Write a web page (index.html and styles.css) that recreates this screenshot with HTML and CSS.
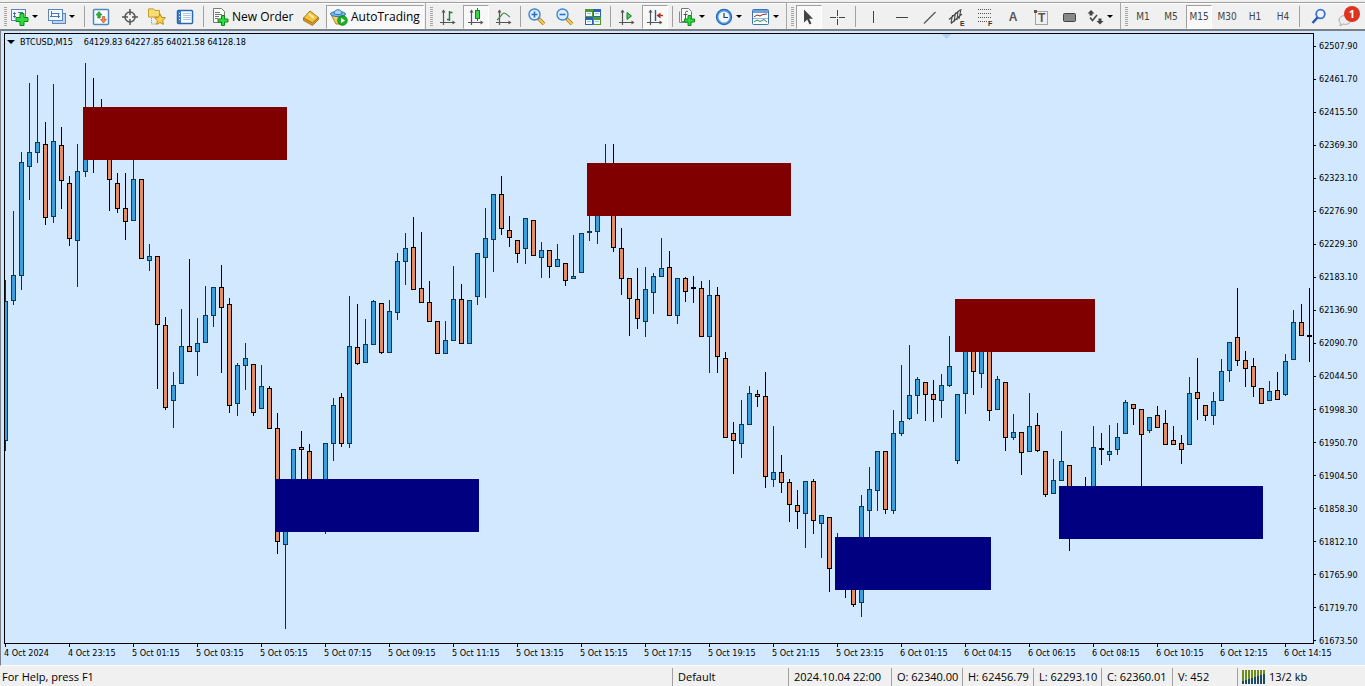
FILE: index.html
```
<!DOCTYPE html>
<html lang="en">
<head>
<meta charset="utf-8">
<title>BTCUSD,M15</title>
<link rel="stylesheet" href="styles.css">
</head>
<body>
<header class="toolbar">
  <div class="group">
    <span class="grip"></span>
    <button class="btn drop" aria-label="New chart"><svg class="icon" viewBox="0 0 18 18"><rect x=".5" y="1.500" width="14" height="11" fill="#f4f9ff" stroke="#5a86bd"/><path d="M3.500 4v6M2 5.500h3M2 8.500h3M7 4.500h5" stroke="#4a78b5" fill="none"/><path d="M9 5.500h4v4h4v4h-4v4H9v-4H5v-4h4z" fill="#2fdc3c" stroke="#0a8a1a"/></svg><span class="caret"></span></button>
    <button class="btn drop" aria-label="Profiles"><svg class="icon" viewBox="0 0 18 18"><rect x="4.500" y="5.500" width="13" height="10" fill="#b9d4f2" stroke="#5a86bd"/><rect x=".5" y="1.500" width="14" height="11" fill="#f4f9ff" stroke="#5a86bd"/><path d="M3.500 3v6M2 8.500h10M10.500 5v5M3.500 5.500h8" stroke="#4a78b5" fill="none"/></svg><span class="caret"></span></button>
    <span class="sep narrow"></span>
    <button class="btn" aria-label="Market watch"><svg class="icon" viewBox="0 0 18 18"><rect x="1.500" y="1.500" width="15" height="15" rx="1" fill="#f7fbff" stroke="#4f86c4" stroke-width="1.500"/><path d="M7 3.500 10 7H8.200v3H5.800V7H4z" fill="#2fb53a" stroke="#0c7d1c" stroke-width=".6"/><path d="M11.500 15 8.500 11.500h1.800v-3h2.400v3h1.800z" fill="#f4874b" stroke="#b9441a" stroke-width=".6"/></svg></button>
    <button class="btn" aria-label="Data window"><svg class="icon" viewBox="0 0 18 18"><circle cx="10" cy="9" r="5" fill="none" stroke="#555" stroke-width="1.500"/><path d="M10 1v6M10 11v6M2 9h6M12 9h6" stroke="#555" stroke-width="1.500"/></svg></button>
    <button class="btn" aria-label="Navigator"><svg class="icon" viewBox="0 0 18 18"><path d="M.5 2V.9h5l1.500 1.500h4.500V9H.5z" fill="#f7dc77" stroke="#c49a28"/><path d="M3.500 10v6H8" stroke="#888" stroke-dasharray="1 1" fill="none"/><path d="m12 5.800 1.700 3.500 3.800.5-2.800 2.700.7 3.900-3.400-1.900-3.400 1.900.7-3.900-2.800-2.700 3.800-.5z" fill="#fbd04a" stroke="#bd8a16"/></svg></button>
    <button class="btn" aria-label="Terminal"><svg class="icon" viewBox="0 0 18 18"><rect x="1.500" y="2.500" width="15" height="13" rx="1" fill="#fff" stroke="#2a66b4" stroke-width="1.500"/><path d="M2 3h3v12H2z" fill="#3b7bc8"/><path d="M7 5.500h8M7 7.500h8M7 9.500h8M7 11.500h8" stroke="#a8c6e8"/><path d="M3 5.500h1M3 8.500h1M3 11.500h1" stroke="#fff"/></svg></button>
    <span class="sep"></span>
    <button class="btn label order"><svg class="icon" viewBox="0 0 18 18"><path d="M1.500.5h8l3 3v11h-11z" fill="#fff" stroke="#777"/><path d="M3 4.500h5M3 6.500h7M3 8.500h4M3 10.500h3" stroke="#777"/><path d="M9.500 7.500h3v3.500h3.500v3h-3.500v3.500h-3V14H6v-3h3.500z" fill="#2fdc3c" stroke="#0a8a1a"/></svg>New Order</button>
    <button class="btn" aria-label="MetaEditor"><svg class="icon" viewBox="0 0 18 18"><path d="M1.500 10 8 3l8.500 6.500L10.500 15z" fill="#f3c443" stroke="#b07d16"/><path d="M1.500 10v2.500l9 5 6-6V9.500l-6 5.500z" fill="#d99b2b" stroke="#9a6a12" stroke-width=".8"/><path d="m7 6 5 3.800" stroke="#fde9a5" stroke-width="2"/></svg></button>
    <button class="btn label auto pressed"><svg class="icon" viewBox="0 0 18 18"><path d="M1.500 7.500h13L11 16H6z" fill="#f2cf5a" stroke="#ad8524"/><ellipse cx="8" cy="6" rx="7.500" ry="2.600" fill="#78b7e8" stroke="#2d78b8"/><path d="M4 5.500C4 .5 12 .5 12 5.500c-2 1.500-6 1.500-8 0z" fill="#a7d5f5" stroke="#2d78b8"/><circle cx="12.500" cy="12.500" r="4.800" fill="#20b02b" stroke="#0b7a18" stroke-width=".8"/><path d="m11 10 4 2.500-4 2.500z" fill="#fff"/></svg>AutoTrading</button>
  </div>
  <div class="group">
    <span class="grip"></span>
    <button class="btn" aria-label="Bar chart"><svg class="icon" viewBox="0 0 18 18"><use href="#axes"/><path d="M10.500 3v10M8 11.500h2.500M10.500 4.500h3" stroke="#16802a" stroke-width="1.400" fill="none"/></svg></button>
    <button class="btn pressed" aria-label="Candlesticks"><svg class="icon" viewBox="0 0 18 18"><use href="#axes"/><path d="M10.500 0v13" stroke="#16802a"/><rect x="8.500" y="2.500" width="4" height="8" fill="#35d843" stroke="#16802a"/></svg></button>
    <button class="btn" aria-label="Line chart"><svg class="icon" viewBox="0 0 18 18"><use href="#axes"/><path d="M2 12C5 10 7 5 9 5s4 3 6 4" stroke="#3b8a47" fill="none" stroke-width="1.200"/></svg></button>
    <span class="sep narrow"></span>
    <button class="btn" aria-label="Zoom in"><svg class="icon" viewBox="0 0 18 18"><use href="#lens"/><path d="M3.500 6.500h6M6.500 3.500v6" stroke="#2b72bd" stroke-width="1.600"/></svg></button>
    <button class="btn" aria-label="Zoom out"><svg class="icon" viewBox="0 0 18 18"><use href="#lens"/><path d="M3.500 6.500h6" stroke="#2b72bd" stroke-width="1.600"/></svg></button>
    <button class="btn" aria-label="Tile windows"><svg class="icon" viewBox="0 0 18 18"><path d="M1 1h8v8H1z" fill="#4b9c2c"/><path d="M9 1h8v8H9zM1 9h8v8H1z" fill="#2a62b8"/><path d="M9 9h8v8H9z" fill="#4b9c2c"/><path d="M2 4h6v4H2zM10 4h6v4h-6zM2 12h6v4H2zM10 12h6v4h-6z" fill="#f2f8fc"/><path d="M3 5.500h4M11 5.500h4M3 13.500h4M11 13.500h4" stroke="#9bbde0"/></svg></button>
    <span class="sep mid"></span>
    <button class="btn" aria-label="Auto scroll"><svg class="icon" viewBox="0 0 18 18"><use href="#axes"/><path d="m9 4.500 4.500 3.500L9 11.500z" fill="#4ccb55" stroke="#16802a"/></svg></button>
    <button class="btn pressed" aria-label="Chart shift"><svg class="icon" viewBox="0 0 18 18"><use href="#axes"/><path d="M9.500 2v11" stroke="#2b5b91" stroke-width="1.400"/><path d="M17 7.500h-5" stroke="#a63320" stroke-width="1.400"/><path d="m14.500 4.500-4 3 4 3z" fill="#a63320"/></svg></button>
    <span class="sep mid"></span>
    <button class="btn drop" aria-label="Indicators"><svg class="icon" viewBox="0 0 18 18"><path d="M3.500.5h7l3 3v10h-10z" fill="#fff" stroke="#777"/><path d="M1.500 3.500v11h8" fill="none" stroke="#888"/><path d="M10 3.500c-2-1-2.500 0-2.500 2V12M5.500 6.500h4" stroke="#555" fill="none"/><path d="M10 7.500h3V11h3.500v3H13v3.500h-3V14H6.500v-3H10z" fill="#2fdc3c" stroke="#0a8a1a"/></svg><span class="caret"></span></button>
    <button class="btn drop" aria-label="Periods"><svg class="icon" viewBox="0 0 18 18"><circle cx="9" cy="9" r="8.200" fill="#2767b8"/><circle cx="9" cy="9" r="7" fill="#579adb"/><circle cx="9" cy="9" r="5.500" fill="#edf6ff"/><path d="M9 5v4.500h4" stroke="#245" fill="none" stroke-width="1.200"/></svg><span class="caret"></span></button>
    <button class="btn drop" aria-label="Templates"><svg class="icon" viewBox="0 0 18 18"><rect x=".5" y="1.500" width="16" height="15" rx="1" fill="#fff" stroke="#3975b8"/><path d="M1 2h15v3H1z" fill="#6ba2dc"/><path d="m2 9 3-2 3 1 3-1.500 4-.5" stroke="#8a2d20" fill="none"/><path d="M1 10.500h15" stroke="#9bbde0"/><path d="m2 14 3-2 3 1.500 4-2 3 2.500" stroke="#218133" fill="none"/></svg><span class="caret"></span></button>
  </div>
  <div class="group">
    <span class="grip"></span>
    <button class="btn pressed" aria-label="Cursor"><svg class="icon" viewBox="0 0 18 18"><path d="M4 1.500v13l3.200-3 2.300 5 2-1-2.300-4.700H13z" fill="#444"/></svg></button>
    <button class="btn" aria-label="Crosshair"><svg class="icon" viewBox="0 0 18 18"><path d="M9.500 2v6M9.500 11v6M2 9.500h6M11 9.500h6M9 9.500h1" stroke="#444"/></svg></button>
    <span class="sep"></span>
    <button class="btn" aria-label="Vertical line"><svg class="icon" viewBox="0 0 18 18"><path d="M9.500 3v12" stroke="#444"/></svg></button>
    <button class="btn" aria-label="Horizontal line"><svg class="icon" viewBox="0 0 18 18"><path d="M4 9.500h12" stroke="#444"/></svg></button>
    <button class="btn" aria-label="Trendline"><svg class="icon" viewBox="0 0 18 18"><path d="M4 15.500 15.500 4" stroke="#555" stroke-width="1.200"/></svg></button>
    <button class="btn" aria-label="Equidistant channel"><svg class="icon" viewBox="0 0 18 18"><path d="M1 11.500 12 2M3 15.500 14 6M4.500 7 3 15M7.500 4.500 6 14M10 3 9 12M13 1l-2 10" stroke="#444" stroke-width="1.100"/><text class="mark" x="12" y="18">E</text></svg></button>
    <button class="btn" aria-label="Fibonacci retracement"><svg class="icon" viewBox="0 0 18 18"><path d="M2 1.500h13M2 5.500h13M2 9.500h13M2 13.500h9" stroke="#555" stroke-dasharray="1 1"/><text class="mark" x="12" y="18">F</text></svg></button>
    <button class="btn tool-text">A</button>
    <button class="btn" aria-label="Text label"><svg class="icon" viewBox="0 0 18 18"><rect x="3.500" y="3.500" width="12" height="13" fill="none" stroke="#555" stroke-dasharray="1 1"/><path d="M2 2h3v3H2z" fill="#555"/><text class="tee" x="6" y="14">T</text></svg></button>
    <button class="btn" aria-label="Rectangle"><svg class="icon" viewBox="0 0 18 18"><rect x="3.500" y="5.500" width="12" height="8" rx="1" fill="#888" stroke="#444"/></svg></button>
    <button class="btn drop arrows" aria-label="Arrows"><svg class="icon" viewBox="0 0 18 18"><path d="m5 2 3.500 3.500H6.500v2h-3v-2h-2zM14 16.500 10.500 13h2v-2.500h3V13h2z" fill="#444"/><path d="m4 9.500 2.500 3L11 7" stroke="#444" stroke-width="1.500" fill="none"/></svg><span class="caret"></span></button>
  </div>
  <div class="group last">
    <span class="grip"></span>
    <button class="btn tf">M1</button><button class="btn tf">M5</button><button class="btn tf pressed">M15</button><button class="btn tf">M30</button><button class="btn tf">H1</button><button class="btn tf">H4</button>
    <span class="sep narrow"></span>
    <button class="btn search" aria-label="Search"><svg class="icon" viewBox="0 0 18 18"><circle cx="10.500" cy="6" r="4.300" fill="#edf4ff" stroke="#3f6fd0" stroke-width="1.800"/><path d="m7.500 9.500-5 5.500" stroke="#2c58b8" stroke-width="2.600"/></svg></button>
    <button class="btn notice" aria-label="Notifications"><svg class="icon" viewBox="0 0 18 18"><path d="M1 12c0-6 12-6 12 0 0 4-5 5-8 4l-3 2 .5-3C1.500 14.500 1 13.500 1 12z" fill="#eee" stroke="#aaa"/></svg><span class="badge">1</span></button>
  </div>
</header>

<svg class="defs" aria-hidden="true"><defs>
  <g id="axes"><path d="M4.500 2v15M1 14.500h14" stroke="#555" stroke-width="1.200"/><path d="m2.500 4.500 2-3 2 3zM13.500 12.500l3 2-3 2z" fill="#555"/></g>
  <g id="lens"><path d="m10.500 10.500 5.500 5.500" stroke="#a67c1b" stroke-width="3.600"/><path d="m11 11 5 5" stroke="#f3cf55" stroke-width="2"/><circle cx="6.500" cy="6.500" r="5.500" fill="#dceeff" stroke="#3f86cc" stroke-width="1.400"/></g>
</defs></svg>

<main class="chart">
  <section class="plot">
    <svg class="candles" viewBox="5 34 1308 609" preserveAspectRatio="none" role="img" aria-label="BTCUSD 15 minute candles"></svg>
    <h1 class="title"><span class="tri"></span><span class="symbol">BTCUSD,M15</span>64129.83 64227.85 64021.58 64128.18</h1>
  </section>
  <ol class="prices"></ol>
  <ol class="times"></ol>
</main>

<footer class="status">
  <span class="cell help">For Help, press F1</span>
  <span class="cell profile">Default</span>
  <span class="cell date">2024.10.04 22:00</span>
  <span class="cell value">O: 62340.00</span>
  <span class="cell value">H: 62456.79</span>
  <span class="cell low">L: 62293.10</span>
  <span class="cell value">C: 62360.01</span>
  <span class="cell volume">V: 452</span>
  <span class="cell traffic"><svg class="bars" viewBox="0 0 24 14"><path d="M1 0v11M4 0v10M7 0v9M10 0v8M13 0v7M16 0v6M19 0v5M22 0v4" stroke="#6d8c1e" stroke-width="2"/><path d="M1 11v3M4 10v4M7 9v5M10 8v6M13 7v7M16 6v8M19 5v9M22 4v10" stroke="#1b4a63" stroke-width="2"/></svg>13/2 kb</span>
</footer>
<script src="chart.js"></script>
</body>
</html>
```
FILE: styles.css
```
* { box-sizing: border-box; }
body {
  margin: 0;
  height: 100vh;
  display: flex;
  flex-direction: column;
  overflow: hidden;
  background: #f0f0f0;
  color: #000;
  font-family: "Open Sans", "Noto Sans", sans-serif;
}
.defs { position: absolute; width: 0; height: 0; }

/* toolbar */
.toolbar {
  display: flex;
  height: 31px;
  flex: none;
  padding-top: 1px;
  border-top: 2px solid #f0f0f0;
  border-bottom: 2px solid #7a8086;
  background: linear-gradient(#a0a0a0 1px, #fff 1px, #fff 2px, #f0f0f0 2px);
}
.group {
  display: flex;
  align-items: center;
  padding-top: 1px;
  border-right: 1px solid #a8a8a8;
}
.group.last { border-right: 0; flex: 1; }
.grip {
  width: 3px;
  height: 20px;
  margin: 0 1px 0 4px;
  background: repeating-linear-gradient(#a5a5a5 0 1px, #f0f0f0 1px 2px);
}
.sep { width: 8px; height: 21px; background: linear-gradient(#a0a0a0, #a0a0a0) center / 1px 100% no-repeat; }
.sep.mid { width: 6px; }
.sep.narrow { width: 5px; }
.btn {
  display: flex;
  align-items: center;
  justify-content: center;
  position: relative;
  flex: none;
  width: 28px;
  height: 24px;
  padding: 0;
  border: 0;
  background: none;
  color: #000;
  font: 12px "Open Sans", "Noto Sans", sans-serif;
  white-space: nowrap;
}
.btn.pressed {
  width: 26px;
  margin: 0 1px;
  border: 1px solid #fff;
  border-top-color: #a0a0a0;
  border-left-color: #a0a0a0;
  background: #f8f8f8;
}
.btn.drop { width: 37px; justify-content: flex-start; padding-left: 3px; gap: 3px; }
.btn.label { justify-content: flex-start; gap: 3px; }
.btn.order { width: 90px; padding-left: 5px; gap: 2px; }
.btn.auto { width: 98px; padding-left: 3px; }
.btn.tf { color: #444; font: 10px "DejaVu Sans Condensed", "Noto Sans", sans-serif; }
.btn.tool-text { color: #555; font: bold 12px "Liberation Sans", sans-serif; }
.btn.search { margin-left: 3px; }
.icon { width: 18px; height: 18px; flex: none; overflow: visible; }
.mark { font: bold 7px "Liberation Sans", sans-serif; fill: #333; }
.tee { font: bold 12px "Liberation Sans", sans-serif; fill: #555; }
.caret { border: 3px solid transparent; border-top-color: #000; border-bottom: 0; }
.badge {
  position: absolute;
  top: 1px;
  right: 1px;
  width: 16px;
  height: 16px;
  border-radius: 50%;
  background: #dc3420;
  color: #fff;
  font: bold 11px/16px "Open Sans", sans-serif;
}

/* chart */
.chart {
  flex: 1;
  min-height: 0;
  display: grid;
  grid-template: minmax(0, 1fr) 21px / minmax(0, 1fr) 51px;
  padding: 2px 0 0 3px;
  border-left: 1px solid #7a8086;
  border-bottom: 1px solid #fff;
  background: #d2e8ff;
  font: 9px/12px "DejaVu Sans Condensed", "Noto Sans", sans-serif;
}
.plot { position: relative; border: 1px solid #000; min-height: 0; }
.candles { display: block; width: 100%; height: 100%; shape-rendering: crispEdges; }
.title {
  position: absolute;
  top: 2px;
  left: 2px;
  display: flex;
  align-items: center;
  gap: 5px;
  margin: 0;
  font: inherit;
}
.symbol { margin-right: 6px; }
.tri { border: 4px solid transparent; border-top-color: #000; border-bottom: 0; }
ol { margin: 0; padding: 0; list-style: none; }
.prices {
  display: flex;
  flex-direction: column;
  justify-content: space-between;
  margin-bottom: -3px;
  padding-top: 7px;
}
.prices li { display: flex; align-items: center; gap: 3px; }
.prices li::before { content: ""; width: 2px; height: 1px; background: #000; }
.times { grid-row: 2; display: flex; padding-left: 1px; white-space: nowrap; }
.times li { flex: 0 0 4.89%; width: 0; position: relative; padding-top: 3px; text-indent: -1px; }
.times li::before { content: ""; position: absolute; top: 0; left: 0; width: 1px; height: 3px; background: #000; }

/* candles */
.up { fill: #3d9fdc; stroke: #0d3b45; }
.down { fill: #e58c62; stroke: #000; }
.wick-up { stroke: #12302c; }
.wick-down { stroke: #000; }
.supply { fill: #800000; }
.demand { fill: #000080; }
.shift { fill: #b4cff2; }

/* status bar */
.status { display: flex; flex: none; height: 20px; padding-top: 2px; font-size: 11px; line-height: 18px; }
.cell { flex: none; padding-left: 5px; border-left: 1px solid #a0a0a0; white-space: nowrap; }
.cell.help { flex: 1; padding-left: 2px; border: 0; }
.profile { width: 116px; }
.date { width: 103px; }
.value { width: 71px; }
.low { width: 68px; }
.volume { width: 65px; }
.traffic { display: flex; align-items: center; gap: 3px; width: 128px; padding-left: 4px; }
.bars { width: 24px; height: 14px; shape-rendering: crispEdges; }
```
FILE: chart.js
```
// Each row: direction, high, body top, body bottom, low (one row per 15 minute bar).
const bars = `
u 280 301 440 451|u 211 275 300 305|u 152 162 275 290|u 83 152 166 200|u 75 142 152 163|d 122 144 217 225
u 84 141 216 223|d 127 145 180 209|d 176 183 238 246|u 144 171 240 287|u 63 120 171 177|d 78 110 150 173
d 99 120 150 155|d 130 140 179 211|d 173 183 208 213|d 173 208 221 240|u 155 179 220 220|d 179 179 258 258
u 244 256 260 271|d 256 256 324 389|d 317 325 407 410|u 372 385 400 428|u 309 346 383 383|d 259 346 351 351
u 318 343 351 376|u 286 315 342 342|u 287 287 315 327|d 265 287 307 373|d 298 304 405 413|u 363 365 403 416
u 343 358 365 390|d 364 364 412 416|u 365 386 408 408|d 386 388 428 428|d 413 428 541 554|u 490 490 544 629
u 449 449 500 500|d 431 447 449 490|d 444 451 500 500|d 490 490 500 500|u 443 443 500 534|u 398 405 443 461
d 393 397 443 447|u 296 346 443 448|d 304 347 363 365|u 319 344 362 362|u 300 301 344 344|d 303 303 352 354
u 300 311 352 352|u 253 261 312 320|u 233 248 261 285|d 217 247 289 289|d 232 288 302 302|d 281 302 321 321
d 321 321 353 353|u 321 340 353 353|u 266 299 340 340|d 284 299 343 343|u 300 300 343 343|u 253 253 296 305
u 208 238 257 298|u 194 194 239 272|d 176 194 228 235|d 216 230 237 247|d 240 240 253 263|u 218 218 248 264
d 220 220 255 255|u 242 250 257 278|d 250 250 266 278|u 244 259 266 266|d 263 263 280 286|u 235 276 278 278
u 233 233 272 272|u 200 231 232 241|u 200 200 231 244|u 144 180 200 210|d 144 200 247 252|d 228 248 278 295
d 278 278 298 336|d 268 299 318 329|u 267 289 321 337|u 273 276 292 314|u 238 268 276 276|d 251 267 315 315
u 278 278 315 324|d 277 278 291 302|d 276 287 288 303|d 281 288 336 336|u 280 295 336 373|d 287 295 356 373
d 352 358 437 437|d 422 433 440 474|u 400 424 443 458|u 386 393 424 424|d 390 394 396 407|d 372 396 476 488
u 426 472 479 487|d 455 472 482 493|d 479 482 504 522|d 490 505 511 529|u 481 481 513 548|d 479 481 520 534
u 515 515 523 558|d 517 517 568 592|u 533 545 560 570|d 545 550 580 598|d 570 570 604 607|u 495 506 602 617
u 467 489 510 540|u 451 451 490 511|d 451 451 509 514|u 410 433 510 514|u 365 421 433 436|u 345 395 418 420
u 377 379 395 414|d 382 382 394 421|d 380 394 399 422|u 374 385 400 418|u 336 366 385 387|u 394 394 460 464
u 340 340 393 414|d 340 340 371 395|u 340 340 373 388|d 340 340 410 421|u 376 379 409 409|d 382 382 437 451
u 414 432 437 440|d 432 432 452 475|u 393 426 451 451|d 413 425 450 452|d 451 451 494 497|u 459 480 493 493
u 431 461 480 480|d 465 465 500 551|d 490 490 500 500|d 477 490 500 500|u 426 447 490 490|d 433 448 449 465
u 425 451 454 461|u 423 437 449 455|u 400 402 433 433|d 404 404 408 425|d 409 409 434 490|u 417 417 430 433
d 406 415 427 427|d 410 423 444 444|d 426 440 444 444|d 435 443 449 464|u 377 393 444 444|d 358 392 398 420
d 405 405 415 421|u 392 401 415 425|u 359 371 400 400|u 342 342 370 382|d 288 337 360 366|d 351 360 368 387
d 358 366 386 397|d 388 388 403 403|u 381 391 400 400|d 372 390 399 399|u 354 361 394 396|u 310 322 359 359
d 304 322 335 335|d 288 335 336 362`.trim().split(/[|\n]/);

const zones = [
  ['supply', 83, 107, 204], ['supply', 587, 163, 204], ['supply', 955, 299, 140],
  ['demand', 275, 479, 204], ['demand', 835, 537, 156], ['demand', 1059, 486, 204]
];

let marks = '<path class="shift" d="M941 34h10l-5 5z"/>';
bars.forEach((bar, i) => {
  const [dir, high, top, bottom, low] = bar.split(' ');
  const x = 5 + 8 * i;
  const kind = dir === 'u' ? 'up' : 'down';
  marks += `<path class="wick-${kind}" d="M${x + 0.5} ${high}V${low}"/>`;
  marks += `<rect class="${kind}" x="${x - 1.5}" y="${+top + 0.5}" width="4" height="${bottom - top}"/>`;
});
zones.forEach(([kind, x, y, w]) => {
  marks += `<rect class="${kind}" x="${x}" y="${y}" width="${w}" height="53"/>`;
});
document.querySelector('.candles').innerHTML = marks;

const prices = ['62507.90', '62461.70', '62415.50', '62369.30', '62323.10', '62276.90', '62229.30',
  '62183.10', '62136.90', '62090.70', '62044.50', '61998.30', '61950.70', '61904.50', '61858.30',
  '61812.10', '61765.90', '61719.70', '61673.50'];
document.querySelector('.prices').innerHTML = prices.map(p => `<li>${p}</li>`).join('');

const times = ['4 Oct 2024', '4 Oct 23:15', '5 Oct 01:15', '5 Oct 03:15', '5 Oct 05:15', '5 Oct 07:15',
  '5 Oct 09:15', '5 Oct 11:15', '5 Oct 13:15', '5 Oct 15:15', '5 Oct 17:15', '5 Oct 19:15',
  '5 Oct 21:15', '5 Oct 23:15', '6 Oct 01:15', '6 Oct 04:15', '6 Oct 06:15', '6 Oct 08:15',
  '6 Oct 10:15', '6 Oct 12:15', '6 Oct 14:15'];
document.querySelector('.times').innerHTML = times.map(t => `<li>${t}</li>`).join('');
```
